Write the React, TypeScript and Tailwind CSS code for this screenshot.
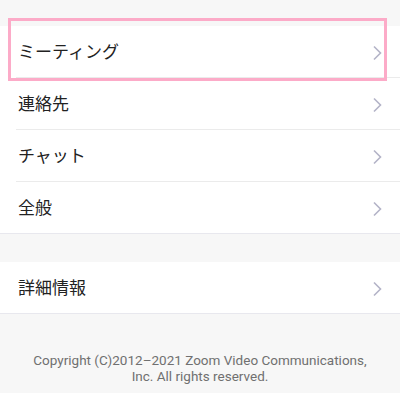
import React from 'react';

const Chevron = () => (
  <svg width="10" height="16" viewBox="0 0 10 16" className="shrink-0">
    <path d="M2 1.5 L8.5 8 L2 14.5" fill="none" stroke="#b3b3c7" strokeWidth="1.6" />
  </svg>
);

const Row = ({ label, last }: { label: string; last?: boolean }) => (
  <div className={last ? 'border-b border-[#e8e8ee]' : ''}>
    <div className="flex h-[51px] items-center justify-between pl-[18px] pr-[18px] pt-[2px]">
      <span className="text-[17px] text-[#222222]">{label}</span>
      <Chevron />
    </div>
    {!last && <div className="ml-4 h-px bg-[#ebebeb]" />}
  </div>
);

const App = () => {
  const items = ['ミーティング', '連絡先', 'チャット', '全般'];
  return (
    <div
      className="relative h-[393px] w-[400px] overflow-hidden bg-[#f7f7f7] pt-[26px]"
      style={{ fontFamily: 'Roboto, "Noto Sans CJK JP", sans-serif' }}
    >
      <div className="bg-white">
        {items.map((label, i) => (
          <Row key={label} label={label} last={i === items.length - 1} />
        ))}
      </div>

      <div className="mt-[28px] bg-white">
        <Row label="詳細情報" last />
      </div>

      <p className="mt-[38px] text-center text-[13.5px] leading-[16px] text-[#707070]">
        Copyright (C)2012–2021 Zoom Video Communications,
        <br />
        Inc. All rights reserved.
      </p>

      <div className="absolute left-[8px] top-[18px] h-[63px] w-[379px] border-[3px] border-[#fcabc8]" />
    </div>
  );
};

export default App;
